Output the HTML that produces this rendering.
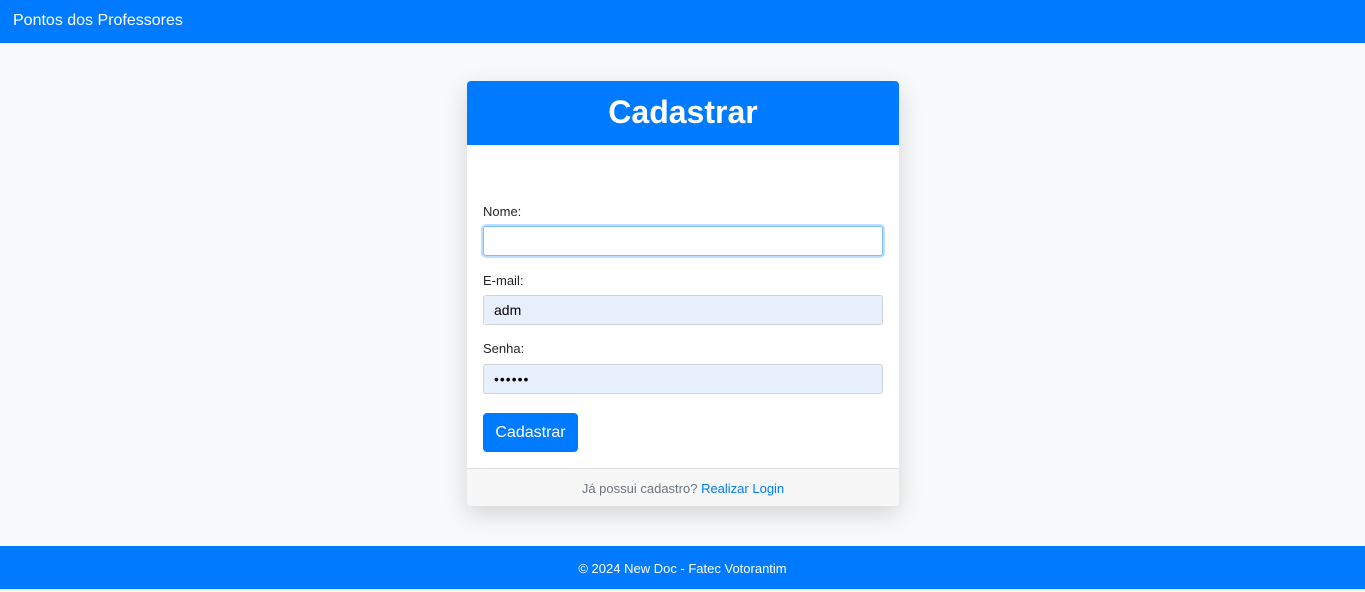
<!DOCTYPE html>
<html><head><style>
*{box-sizing:border-box;margin:0;padding:0}
body{width:1365px;height:589px;background:#f8f9fa;font-family:"Liberation Sans",sans-serif;position:relative;overflow:hidden}
.nav{position:absolute;top:0;left:0;right:0;height:43px;background:#007bff;color:#fff;font-size:16px;line-height:42px;padding-left:13px}
.card{position:absolute;left:467px;top:81px;width:432px;height:425px;background:#fff;border-radius:4px;box-shadow:0 8px 24px rgba(0,0,0,.15);overflow:hidden}
.hd{height:64px;background:#007bff;color:#fff;font-weight:bold;font-size:32px;text-align:center;line-height:62px}
label{position:absolute;left:16px;font-size:13px;color:#212529}
.in{position:absolute;left:16px;width:400px;height:30px;border:1px solid #ced4da;border-radius:3px;background:#e8f0fe;font-size:14px;padding-left:10px;line-height:28px;color:#000}
.btn{position:absolute;left:16px;top:332px;width:95px;height:39px;background:#007bff;color:#fff;border-radius:4px;font-size:16px;text-align:center;line-height:39px}
.ft{position:absolute;left:0;right:0;top:387px;height:38px;background:#f7f7f7;border-top:1px solid #ddd;text-align:center;font-size:13px;color:#6c757d;line-height:40px}
.ft a{color:#007bff;text-decoration:none}
.pf{position:absolute;left:0;right:0;top:546px;height:43px;background:#007bff;color:#fff;text-align:center;font-size:13px;line-height:46px}
</style></head><body>
<div class="nav">Pontos dos Professores</div>
<div class="card">
<div class="hd">Cadastrar</div>
<label style="top:123px">Nome:</label>
<div class="in" style="top:145px;background:#fff;border:1px solid #80bdff;box-shadow:0 0 0 2px rgba(0,123,255,.25)"></div>
<label style="top:192px">E-mail:</label>
<div class="in" style="top:214px">adm</div>
<label style="top:260px">Senha:</label>
<div class="in" style="top:283px;letter-spacing:1px">••••••</div>
<div class="btn">Cadastrar</div>
<div class="ft">Já possui cadastro? <a>Realizar Login</a></div>
</div>
<div class="pf">© 2024 New Doc - Fatec Votorantim</div>
</body></html>
